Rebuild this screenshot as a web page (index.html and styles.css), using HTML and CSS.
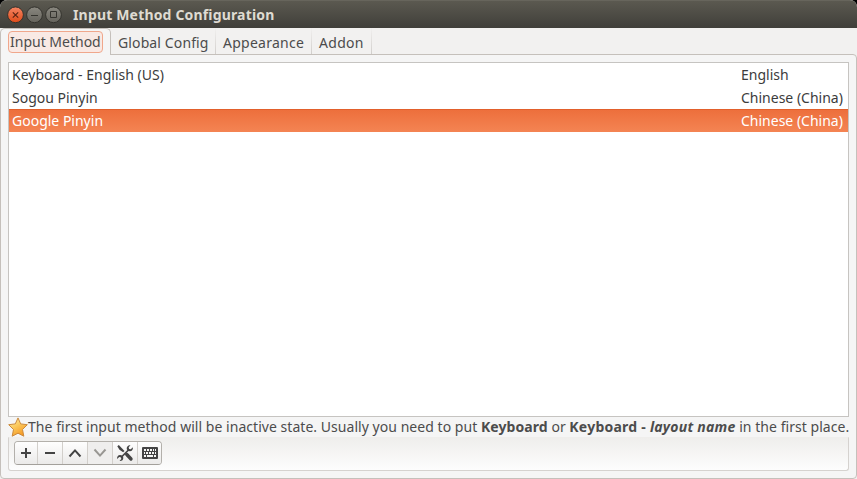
FILE: index.html
```html
<!DOCTYPE html>
<html lang="en">
<head>
<meta charset="utf-8">
<title>Input Method Configuration</title>
<link rel="stylesheet" href="styles.css">
</head>
<body>
<div class="window">
  <header class="titlebar">
    <svg class="controls" width="58" height="20" viewBox="0 0 58 20">
      <defs>
        <linearGradient id="close" x1="0" y1="0" x2="0" y2="1"><stop offset="0" stop-color="#f58563"/><stop offset="1" stop-color="#df4b19"/></linearGradient>
        <linearGradient id="gray" x1="0" y1="0" x2="0" y2="1"><stop offset="0" stop-color="#8a8880"/><stop offset="1" stop-color="#65635c"/></linearGradient>
      </defs>
      <g stroke="#33322d" stroke-width="1">
        <circle cx="8.5" cy="9.8" r="7.9" fill="url(#close)"/>
        <circle cx="27.5" cy="9.800" r="7.9" fill="url(#gray)"/>
        <circle cx="46.5" cy="9.800" r="7.9" fill="url(#gray)"/>
      </g>
      <path d="M5.800 7.300l5.400 5.400M11.200 7.300l-5.400 5.400" stroke="#5a2413" stroke-width="1.2"/>
      <path d="M24 10.500h7M43.500 6.500h6v6h-6z" fill="none" stroke="#35342f"/>
    </svg>
    <h1 class="title">Input Method Configuration</h1>
  </header>
  <nav class="tabs">
    <div class="tab tab-active"><span class="focus">Input Method</span></div>
    <div class="tab tab-global">Global Config</div>
    <div class="tab tab-appearance">Appearance</div>
    <div class="tab tab-addon">Addon</div>
  </nav>
  <main class="page">
    <div class="list">
      <div class="row"><span>Keyboard - English (US)</span><span class="lang">English</span></div>
      <div class="row"><span>Sogou Pinyin</span><span class="lang">Chinese (China)</span></div>
      <div class="row row-selected"><span>Google Pinyin</span><span class="lang">Chinese (China)</span></div>
    </div>
    <div class="hint">
      <svg width="20" height="20" viewBox="0 0 20 20">
        <defs><linearGradient id="star" x1="0" y1="0" x2=".6" y2="1"><stop offset="0" stop-color="#fff3b5"/><stop offset=".5" stop-color="#fbc95c"/><stop offset="1" stop-color="#f59a25"/></linearGradient></defs>
        <path d="M10 .9l2.700 6 6.600.8-4.800 4.800 1.300 6.700L10 16.200 4.200 19.200l1.300-6.700L.7 7.700l6.600-.8z" fill="url(#star)" stroke="#cc8a3c" stroke-linejoin="round"/>
      </svg>
      <p class="message"><span class="lead">The first input method will be inactive state. Usually you need to put </span><b class="term">Keyboard</b> or <b class="pattern">Keyboard - <i>layout name</i></b><span class="lead"> in the first place.</span></p>
    </div>
    <div class="toolbar">
      <div class="buttons">
        <button class="btn" aria-label="Add"><svg width="16" height="16"><path d="M8 3v10M3 8h10" stroke="#444" stroke-width="2"/></svg></button>
        <button class="btn" aria-label="Remove"><svg width="16" height="16"><path d="M3 8h10" stroke="#444" stroke-width="2"/></svg></button>
        <button class="btn" aria-label="Move up"><svg width="16" height="16"><path d="M2.500 11.500L8 5.400l5.500 6.100" fill="none" stroke="#444" stroke-width="2"/></svg></button>
        <button class="btn" aria-label="Move down" disabled><svg width="16" height="16"><path d="M2.500 4.500L8 10.600 13.500 4.500" fill="none" stroke="#999793" stroke-width="2"/></svg></button>
        <button class="btn" aria-label="Configure"><svg width="18" height="18" viewBox="0 0 18 18">
          <path d="M1.300 2.300L2.800 1l5.700 6-1.400 1.300-3.600-2.600z" fill="#444"/>
          <path d="M10.800 10.500l4.200 4.500" stroke="#444" stroke-width="3.400" stroke-linecap="round"/>
          <path d="M5 13.500L13 5.500" stroke="#444" stroke-width="1.700"/>
          <path d="M14.500 1.300L12.700 3.300l.4 1.700 1.700.3 2-2c.5 2-.8 4-2.900 4-2 0-3.200-1.400-3.200-3 0-2 1.900-3.500 3.800-3z" fill="#444"/>
          <path d="M3.500 16.900l1.800-2-.4-1.700-1.700-.3-2 2c-.5-2 .8-4 2.900-4 2 0 3.200 1.400 3.200 3 0 2-1.900 3.500-3.800 3z" fill="#444"/>
        </svg></button>
        <button class="btn" aria-label="Keyboard layout"><svg width="16" height="12" viewBox="0 0 16 12">
          <rect width="16" height="12" rx="1" fill="#444"/>
          <path d="M2 3h2m1 0h2m1 0h2m1 0h1m1 0h1M2 6h1m1 0h2m1 0h2m1 0h2m1 0h1M2 9h2m1 0h6m1 0h2" stroke="#f6f6f5" stroke-width="2"/>
        </svg></button>
      </div>
    </div>
  </main>
</div>
</body>
</html>
```
FILE: styles.css
```css
* { box-sizing: border-box; }
body {
  margin: 0;
  background: #000;
  color: #3c3c3c;
  font: 14px/20px "Noto Sans", "Open Sans", sans-serif;
}
.window {
  width: 857px;
  height: 479px;
  display: flex;
  flex-direction: column;
  background: #f2f1f0;
  border-radius: 7px 7px 0 0;
  overflow: hidden;
}
.titlebar {
  height: 28px;
  flex: none;
  display: flex;
  align-items: center;
  padding: 0 7px;
  background: linear-gradient(#5b5950, #403f3a);
  border-top: 1px solid #67655c;
}
.controls { flex: none; }
.title {
  margin: 0 0 0 8px;
  font-size: 14px;
  line-height: 20px;
  font-weight: 700;
  color: #dfdbd2;
  white-space: nowrap;
  letter-spacing: .17px;
}
.tabs {
  height: 27px;
  flex: none;
  display: flex;
  margin-bottom: -1px;
  z-index: 1;
}
.tab {
  height: 26px;
  padding: 5px 0 0 7px;
  white-space: nowrap;
  color: #4c4c4c;
  border-right: 1px solid;
  border-image: linear-gradient(#f2f1f0, #d0cdca) 1;
}
.tab-active {
  width: 111px;
  height: 27px;
  padding: 2px 0 0 7px;
  background: #f5f5f5;
  border: 1px solid #c5c0bb;
  border-bottom: 0;
  border-image: none;
  border-radius: 5px 5px 0 0;
}
.tab-global { width: 105px; letter-spacing: .12px; }
.tab-appearance { width: 96px; letter-spacing: .25px; }
.tab-addon { width: 60px; letter-spacing: .3px; }
.focus {
  display: block;
  width: 95px;
  height: 22px;
  padding: 0 1px;
  border: 1px solid #f0a78c;
  border-radius: 4px;
  background: #f9e9e4;
}
.page {
  flex: 1;
  display: flex;
  flex-direction: column;
  padding: 7px 7px 7px 7px;
  background: #f5f5f5;
  border: 1px solid #c5c0bb;
  border-radius: 0 4px 4px 4px;
}
.list {
  height: 355px;
  flex: none;
  background: #fff;
  border: 1px solid #c6c4c1;
}
.row {
  height: 23px;
  display: flex;
  justify-content: space-between;
  align-items: center;
  padding-left: 3px;
  white-space: nowrap;
}
.row-selected {
  color: #fff;
  background: linear-gradient(#ed6f3c, #f48453);
  border-top: 1px solid #e2602c;
}
.lang { width: 107px; }
.hint {
  height: 20px;
  flex: none;
  display: flex;
  align-items: center;
}
.hint svg { flex: none; }
.message { margin: 0; white-space: pre; color: #4c4c4c; }
.lead { letter-spacing: .04px; }
.term { letter-spacing: .08px; }
.pattern { letter-spacing: .24px; }
.toolbar {
  height: 34px;
  flex: none;
  padding: 4px 6px;
  background: linear-gradient(#efeeec, #fdfdfd);
  border: 1px solid #d5d2cf;
  border-top-color: #efeeec;
  border-radius: 0 0 3px 3px;
}
.buttons {
  display: grid;
  grid-template-columns: 23px 25px 25px 25px 25px 23px;
  width: 148px;
  height: 24px;
  margin-left: -1px;
  margin-top: -1px;
  border: 1px solid #b3b0ab;
  border-bottom-color: #a3a09b;
  border-radius: 4px;
  overflow: hidden;
}
.btn {
  display: flex;
  align-items: center;
  justify-content: center;
  padding: 0;
  border: 0;
  border-right: 1px solid #d2cfcb;
  background: linear-gradient(#fefefe, #ebeae9);
}
.btn:last-child { border-right: 0; }
.btn:disabled { background: #efeeed; }
```
